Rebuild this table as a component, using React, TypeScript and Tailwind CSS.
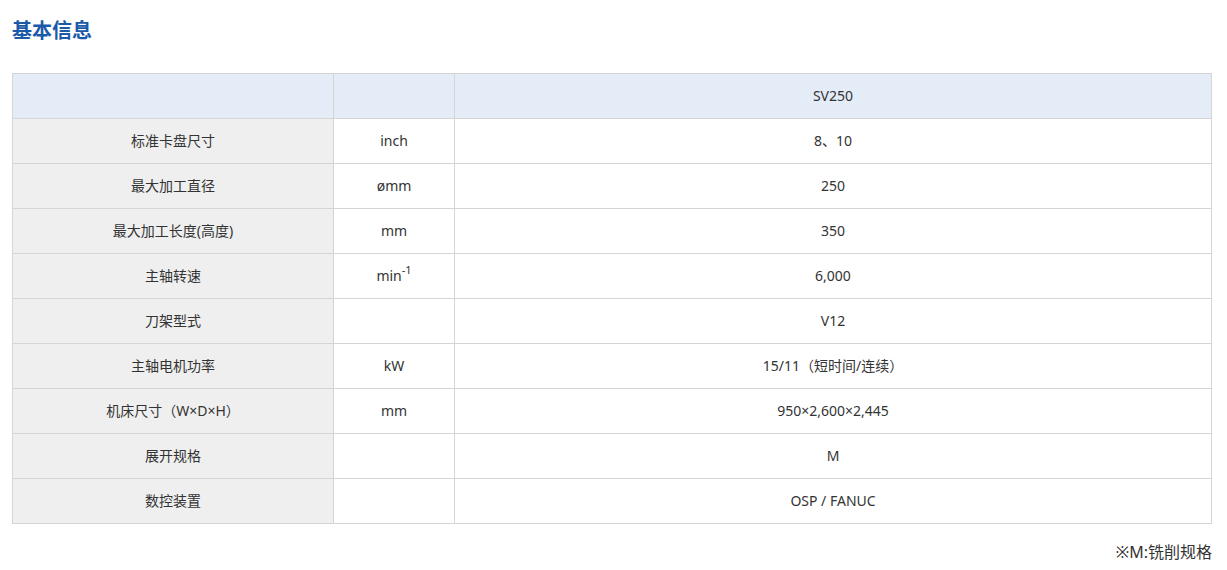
const rows: { label: string; unit: React.ReactNode; value: string }[] = [
  { label: "标准卡盘尺寸", unit: "inch", value: "8、10" },
  { label: "最大加工直径", unit: "ømm", value: "250" },
  { label: "最大加工长度(高度)", unit: "mm", value: "350" },
  {
    label: "主轴转速",
    unit: (
      <>
        min<sup className="text-[11px] -top-[0.6em]">-1</sup>
      </>
    ),
    value: "6,000",
  },
  { label: "刀架型式", unit: "", value: "V12" },
  { label: "主轴电机功率", unit: "kW", value: "15/11（短时间/连续）" },
  { label: "机床尺寸（W×D×H）", unit: "mm", value: "950×2,600×2,445" },
  { label: "展开规格", unit: "", value: "M" },
  { label: "数控装置", unit: "", value: "OSP / FANUC" },
];

export default function App() {
  return (
    <div
      className="w-[1227px] h-[570px] bg-white px-3 pt-[18px] text-[#333]"
      style={{ fontFamily: '"Noto Sans", "Noto Sans CJK SC", sans-serif' }}
    >
      <h2 className="text-[20px] leading-[26px] font-bold text-[#1a5aa8]">基本信息</h2>

      <table className="mt-[29px] w-[1200px] border-collapse table-fixed text-[14px] text-center">
        <colgroup>
          <col className="w-[321px]" />
          <col className="w-[121px]" />
          <col />
        </colgroup>
        <thead>
          <tr className="h-[45px] bg-[#e4ecf7]">
            <th className="border border-[#d5d5d5] font-normal"></th>
            <th className="border border-[#d5d5d5] font-normal"></th>
            <th className="border border-[#d5d5d5] font-normal pb-[2px]">SV250</th>
          </tr>
        </thead>
        <tbody>
          {rows.map((r) => (
            <tr key={r.label} className="h-[45px]">
              <td className="border border-[#d5d5d5] bg-[#efefef] pb-[2px]">{r.label}</td>
              <td className="border border-[#d5d5d5] pb-[2px]">{r.unit}</td>
              <td className="border border-[#d5d5d5] pb-[2px]">{r.value}</td>
            </tr>
          ))}
        </tbody>
      </table>

      <p className="mt-[17px] w-[1200px] text-right text-[16px] leading-[22px]">※M:铣削规格</p>
    </div>
  );
}
